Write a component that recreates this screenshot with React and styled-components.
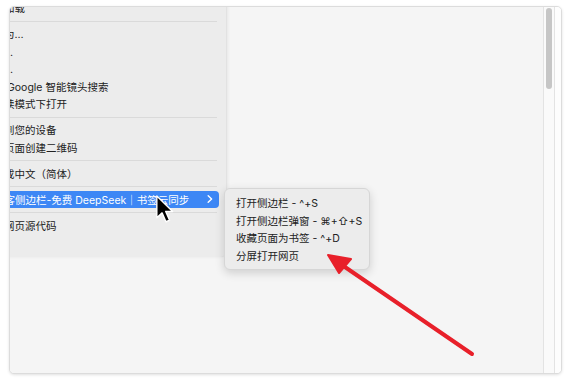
import styled, { createGlobalStyle } from "styled-components";

const GlobalStyle = createGlobalStyle`
  html, body {
    margin: 0;
    padding: 0;
    background: #ffffff;
  }
`;

const font = `Inter, "Noto Sans CJK SC", sans-serif`;

const mainItems = [
  { label: "返回" },
  { label: "前进" },
  { label: "重新加载" },
  { sep: true },
  { label: "另存为…" },
  { label: "打印…" },
  { label: "投放…" },
  { label: "使用 Google 智能镜头搜索" },
  { label: "在阅读模式下打开" },
  { sep: true },
  { label: "发送到您的设备" },
  { label: "为此页面创建二维码" },
  { sep: true },
  { label: "翻译成中文（简体）" },
  { sep: true },
  { label: "博客侧边栏-免费 DeepSeek｜书签云同步", active: true, sub: true, icon: true },
  { sep: true },
  { label: "查看网页源代码" },
  { label: "检查" },
];

const subItems = [
  "打开侧边栏 - ^+S",
  "打开侧边栏弹窗 - ⌘+⇧+S",
  "收藏页面为书签 - ^+D",
  "分屏打开网页",
];

const App = () => {
  return (
    <>
      <GlobalStyle />
      <Page>
        <Window>
          <Content>
            <Menu>
              {mainItems.map((item, i) =>
                item.sep ? (
                  <Separator key={i} />
                ) : (
                  <Item key={i} $active={item.active}>
                    <Label>
                      {item.icon && <ExtIcon />}
                      {item.label}
                    </Label>
                    {item.sub && (
                      <svg width="6" height="8" viewBox="0 0 6 8">
                        <path
                          d="M1.2 0.8 L4.6 4 L1.2 7.2"
                          fill="none"
                          stroke="#fff"
                          strokeWidth="1.4"
                          strokeLinecap="round"
                          strokeLinejoin="round"
                        />
                      </svg>
                    )}
                  </Item>
                )
              )}
            </Menu>

            <SubMenu>
              {subItems.map((label) => (
                <SubItem key={label}>{label}</SubItem>
              ))}
            </SubMenu>

            <Cursor width="18" height="28" viewBox="0 0 13 20">
              <path
                d="M0.6 0.6 L0.6 16.4 L4.4 12.8 L7.2 19.2 L9.8 18.1 L7 11.8 L12 11.8 Z"
                fill="#000"
                stroke="#fff"
                strokeWidth="1"
                strokeLinejoin="round"
              />
            </Cursor>

            <Annotation width="533" height="366" viewBox="0 0 533 366">
              <line
                x1="462"
                y1="347"
                x2="332"
                y2="258"
                stroke="#e8202a"
                strokeWidth="4"
                strokeLinecap="round"
              />
              <polygon
                points="318,248 341,252 329,266"
                fill="#e8202a"
                stroke="#e8202a"
                strokeWidth="2"
                strokeLinejoin="round"
              />
            </Annotation>
          </Content>
          <ScrollTrack>
            <Thumb />
          </ScrollTrack>
          <Gutter />
        </Window>
      </Page>
    </>
  );
};

export default App;

const Page = styled.div`
  width: 571px;
  height: 381px;
  box-sizing: border-box;
  padding: 6px 9px 7px 9px;
  background: #ffffff;
  font-family: ${font};
`;

const Window = styled.div`
  width: 553px;
  height: 368px;
  box-sizing: border-box;
  display: flex;
  border: 1px solid #dcdcdc;
  border-radius: 5px;
  overflow: hidden;
  box-shadow: 0 1px 3px rgba(0, 0, 0, 0.12);
  background: #fcfcfc;
`;

const Content = styled.div`
  flex: 1;
  position: relative;
  background: #f5f5f5;
  overflow: hidden;
`;

const Menu = styled.div`
  position: absolute;
  left: -50px;
  top: -48px;
  width: 266px;
  box-sizing: border-box;
  padding: 5px 0;
  display: flex;
  flex-direction: column;
  background: #ececec;
  border-radius: 6px;
  box-shadow: 1px 0 0 #e2e2e2, 2px 0 3px rgba(0, 0, 0, 0.06);
`;

const Item = styled.div`
  height: 17.5px;
  margin: 0 7px;
  padding: 0 6px 0 16px;
  display: flex;
  align-items: center;
  justify-content: space-between;
  border-radius: 4px;
  font-size: 10.5px;
  white-space: nowrap;
  color: ${({ $active }) => ($active ? "#ffffff" : "#222222")};
  background: ${({ $active }) => ($active ? "#3d87f5" : "transparent")};
`;

const Label = styled.span`
  display: flex;
  align-items: center;
`;

const ExtIcon = styled.span`
  width: 9px;
  height: 9px;
  margin-right: 2px;
  border-radius: 2px;
  background: #ffffff;
`;

const Separator = styled.div`
  height: 1px;
  margin: 4px 9px 3.5px 7px;
  background: #dadada;
`;

const SubMenu = styled.div`
  position: absolute;
  left: 214px;
  top: 181px;
  width: 146px;
  box-sizing: border-box;
  padding: 5px 5px;
  display: flex;
  flex-direction: column;
  background: #ececec;
  border: 0.5px solid #d6d6d6;
  border-radius: 6px;
  box-shadow: 0 3px 10px rgba(0, 0, 0, 0.16);
`;

const SubItem = styled.div`
  height: 17.5px;
  padding-left: 6px;
  display: flex;
  align-items: center;
  font-size: 10.5px;
  white-space: nowrap;
  color: #222222;
`;

const Cursor = styled.svg`
  position: absolute;
  left: 146px;
  top: 188px;
`;

const Annotation = styled.svg`
  position: absolute;
  left: 0;
  top: 0;
  pointer-events: none;
`;

const ScrollTrack = styled.div`
  width: 12px;
  box-sizing: border-box;
  padding: 1px 2px;
  background: #fafafa;
  border-left: 1px solid #e3e3e3;
  border-right: 1px solid #e3e3e3;
`;

const Thumb = styled.div`
  height: 81px;
  border-radius: 4px;
  background: #c6c6c6;
`;

const Gutter = styled.div`
  width: 6px;
  background: #fdfdfd;
`;
